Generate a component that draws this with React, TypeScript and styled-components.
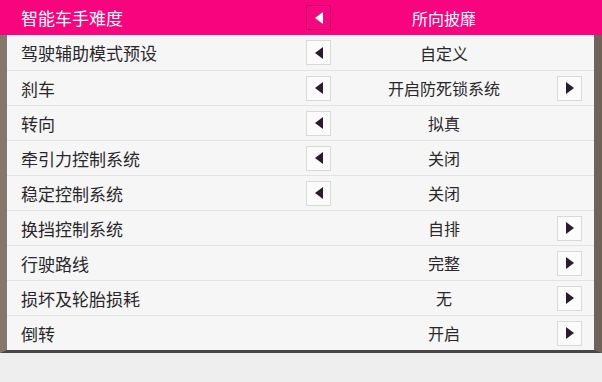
import React from 'react';
import styled, { createGlobalStyle } from 'styled-components';

const GlobalStyle = createGlobalStyle`
    html, body {
        margin: 0;
        padding: 0;
        background: #eeeeee;
    }
    body {
        font-family: "Noto Sans CJK SC", "Noto Sans", sans-serif;
    }
`;

const Screen = styled.div`
    width: 602px;
    height: 382px;
    background: #eeeeee;
    overflow: hidden;
`;

const Header = styled.div`
    height: 35px;
    background: #f9047f;
    display: grid;
    grid-template-columns: 1fr 25px 226px 25px 20px;
    align-items: center;
    padding-left: 21px;
    color: #ffffff;
`;

const Panel = styled.div`
    background: #f6f6f6;
    border-left: 7px solid #85786a;
    border-right: 8px solid #6e6358;
    border-bottom: 3px solid #4a4548;
`;

const Row = styled.div<{ $first?: boolean }>`
    height: 35px;
    box-sizing: border-box;
    display: grid;
    grid-template-columns: 1fr 25px 226px 25px 12px;
    align-items: center;
    padding-left: 14px;
    border-top: ${p => (p.$first ? 'none' : '1px solid #e3e3e3')};
    color: #2a272b;
`;

const Label = styled.span`
    font-size: 17px;
    line-height: 1;
`;

const Value = styled.span`
    font-size: 16px;
    line-height: 1;
    text-align: center;
`;

const ArrowButton = styled.div<{ $active?: boolean }>`
    width: 25px;
    height: 25px;
    box-sizing: border-box;
    display: flex;
    align-items: center;
    justify-content: center;
    border: 1px solid ${p => (p.$active ? '#d4006a' : '#d9d9d9')};
    background: ${p => (p.$active ? '#f4087f' : '#fbfbfb')};
`;

const Arrow = ({ dir, color }: { dir: 'left' | 'right'; color: string }) => (
    <svg width="10" height="14" viewBox="0 0 10 14">
        <polygon points={dir === 'left' ? '9,1 1,7 9,13' : '1,1 9,7 1,13'} fill={color} />
    </svg>
);

const settings = [
    { label: '驾驶辅助模式预设', value: '自定义', left: true, right: false },
    { label: '刹车', value: '开启防死锁系统', left: true, right: true },
    { label: '转向', value: '拟真', left: true, right: false },
    { label: '牵引力控制系统', value: '关闭', left: true, right: false },
    { label: '稳定控制系统', value: '关闭', left: true, right: false },
    { label: '换挡控制系统', value: '自排', left: false, right: true },
    { label: '行驶路线', value: '完整', left: false, right: true },
    { label: '损坏及轮胎损耗', value: '无', left: false, right: true },
    { label: '倒转', value: '开启', left: false, right: true },
];

const App = () => (
    <Screen>
        <GlobalStyle />
        <Header>
            <Label>智能车手难度</Label>
            <ArrowButton $active>
                <Arrow dir="left" color="#ffffff" />
            </ArrowButton>
            <Value>所向披靡</Value>
            <span />
            <span />
        </Header>
        <Panel>
            {settings.map((s, i) => (
                <Row key={s.label} $first={i === 0}>
                    <Label>{s.label}</Label>
                    {s.left ? (
                        <ArrowButton>
                            <Arrow dir="left" color="#2a1a2c" />
                        </ArrowButton>
                    ) : (
                        <span />
                    )}
                    <Value>{s.value}</Value>
                    {s.right ? (
                        <ArrowButton>
                            <Arrow dir="right" color="#2a1a2c" />
                        </ArrowButton>
                    ) : (
                        <span />
                    )}
                    <span />
                </Row>
            ))}
        </Panel>
    </Screen>
);

export default App;
